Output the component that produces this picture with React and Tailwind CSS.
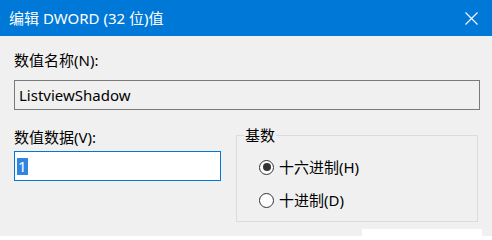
export default function App() {
  return (
    <div
      className="w-[492px] h-[236px] overflow-hidden bg-[#f0f0f0] text-black text-[15px]"
      style={{ fontFamily: '"Noto Sans", "Noto Sans CJK SC", sans-serif' }}
    >
      {/* title bar */}
      <div className="h-[36px] bg-[#0078d7] flex items-center justify-between pl-[9px] pr-[14px]">
        <span className="text-white text-[15px] leading-[20px]">编辑 DWORD (32 位)值</span>
        <svg width="13" height="13" viewBox="0 0 13 13" className="block">
          <path d="M0.5 0.5L12.5 12.5M12.5 0.5L0.5 12.5" stroke="white" strokeWidth="1.1" />
        </svg>
      </div>

      <div className="px-[14px]">
        <div className="mt-[14px] leading-[20px]">数值名称(N):</div>
        <div className="mt-[10px] w-[466px] h-[30px] border border-[#7a7a7a] bg-[#f0f0f0] flex items-center pl-[4px] leading-[20px]">
          ListviewShadow
        </div>

        <div className="mt-[15px] flex">
          <div className="pt-[2px]">
            <div className="leading-[20px]">数值数据(V):</div>
            <div className="mt-[4px] w-[207px] h-[30px] border border-[#0078d7] bg-white flex items-center pl-[2px]">
              <span className="bg-[#2f86e0] text-white leading-[17px] px-[1px]">1</span>
            </div>
          </div>

          <fieldset className="ml-[15px] w-[242px] h-[97px] border border-[#dcdcdc] pl-[7px]">
            <legend className="px-[1px] leading-[20px]">基数</legend>
            <div className="pl-[15px] mt-[12px] flex flex-col gap-[13px]">
              <label className="flex items-center gap-[5px] leading-[20px]">
                <span className="w-[15px] h-[15px] rounded-full border border-[#333333] bg-white flex items-center justify-center">
                  <span className="w-[8px] h-[8px] rounded-full bg-[#333333]" />
                </span>
                十六进制(H)
              </label>
              <label className="flex items-center gap-[5px] leading-[20px]">
                <span className="w-[15px] h-[15px] rounded-full border border-[#333333] bg-white" />
                十进制(D)
              </label>
            </div>
          </fieldset>
        </div>

        <div className="mt-[7px] flex justify-end">
          <div className="w-[120px] h-[30px] bg-white mr-[-4px]" />
        </div>
      </div>
    </div>
  );
}
